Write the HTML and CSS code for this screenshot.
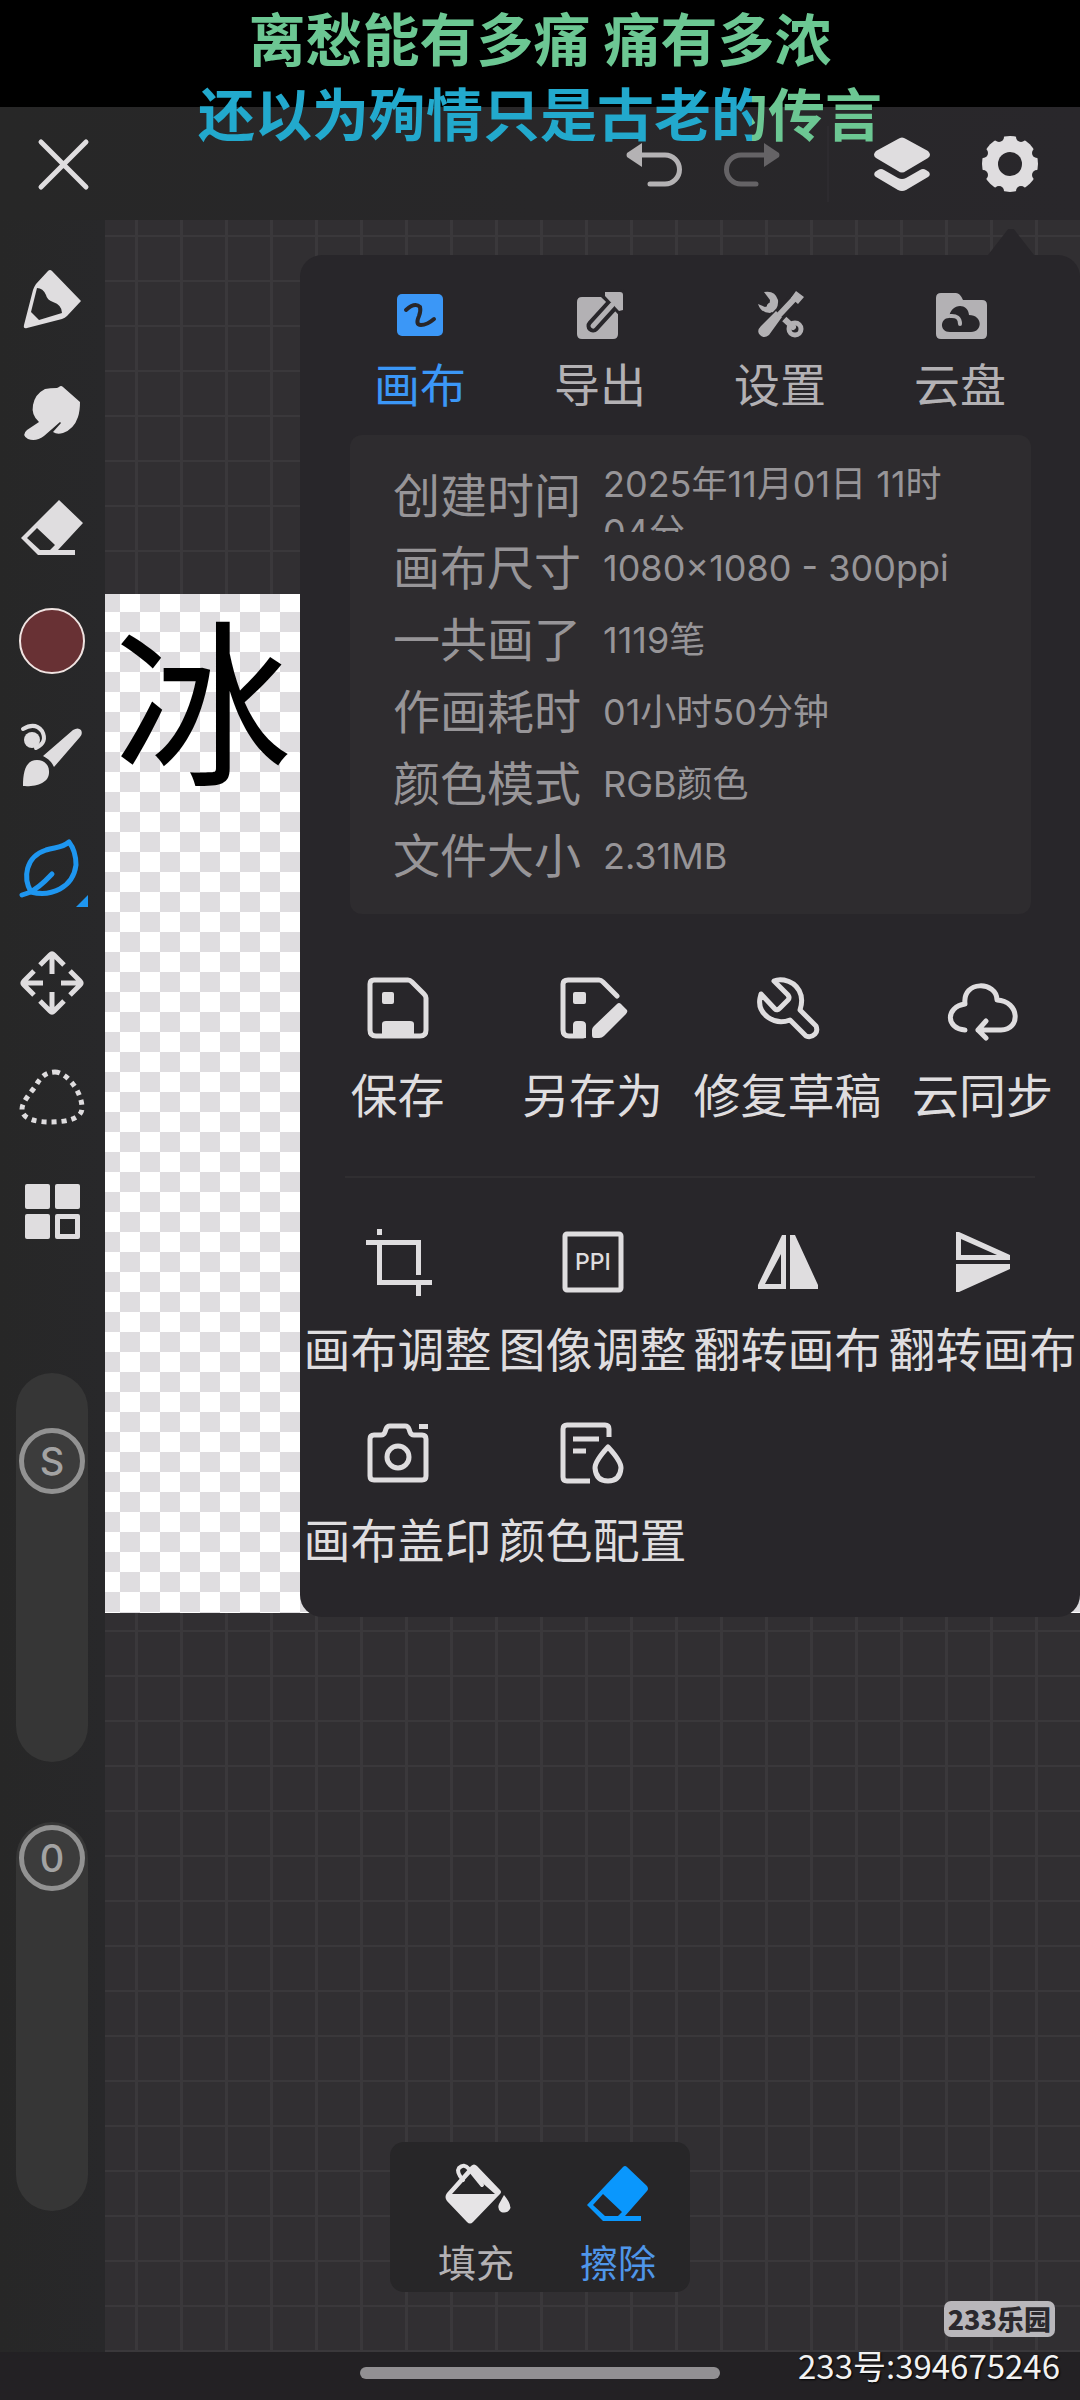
FILE: index.html
```html
<!DOCTYPE html>
<html lang="zh-CN">
<head>
<meta charset="utf-8">
<meta name="viewport" content="width=device-width, initial-scale=1">
<title>画布设置</title>
<link rel="stylesheet" href="styles.css">
</head>
<body>
<div class="app">
  <div class="status-bar"></div>

  <header class="topbar">
    <button class="tool-icon" type="button" aria-label="关闭">
      <svg viewBox="0 0 72 72"><path class="line" d="M14 14 59 59M59 14 14 59"/></svg>
    </button>
    <div class="topbar-actions">
      <button class="tool-icon undo" type="button" aria-label="撤销">
        <svg viewBox="0 0 72 72"><path d="M8 25 23 15V39L8 29Q7 27 8 25Z"/><path class="line" d="M22 27H46a14 14 0 0 1 0 29H31"/></svg>
      </button>
      <button class="tool-icon redo" type="button" aria-label="重做">
        <svg viewBox="0 0 72 72"><path d="M64 25 49 15V39L64 29Q65 27 64 25Z"/><path class="line" d="M50 27H26a14 14 0 0 0 0 29H41"/></svg>
      </button>
      <span class="separator"></span>
      <button class="tool-icon" type="button" aria-label="图层">
        <svg viewBox="0 0 72 72"><path d="M32 11Q36 8 40 11L62 23Q66 27 62 30L40 43Q36 46 32 43L10 30Q6 27 10 23Z"/><path d="M12 42Q15 40 18 42L32 50Q36 52 40 50L54 42Q57 40 60 42L63 44Q65 47 62 49L40 62Q36 64 32 62L10 49Q7 47 9 44Z"/></svg>
      </button>
      <button class="tool-icon" type="button" aria-label="设置">
        <svg viewBox="0 0 72 72">
          <mask id="gear-cut">
            <rect width="72" height="72" fill="#fff"/>
            <circle cx="36" cy="36" r="12" fill="#000"/>
            <g fill="#000">
              <circle cx="47" cy="9" r="5"/><circle cx="63" cy="25" r="5"/>
              <circle cx="63" cy="47" r="5"/><circle cx="47" cy="63" r="5"/>
              <circle cx="25" cy="63" r="5"/><circle cx="9" cy="47" r="5"/>
              <circle cx="9" cy="25" r="5"/><circle cx="25" cy="9" r="5"/>
            </g>
          </mask>
          <circle cx="36" cy="36" r="28" mask="url(#gear-cut)"/>
        </svg>
      </button>
    </div>
  </header>

  <main class="workspace">
    <nav class="sidebar" aria-label="工具">
      <button class="tool" type="button" aria-label="画笔">
        <svg viewBox="0 0 72 72"><path fill-rule="evenodd" d="M32 8Q34 6 36 8L65 38 51 53Q49 55 46 56L11 65Q7 66 8 62L17 27Q18 24 20 21ZM21 25 15 49 23 57 46 50Q46 42 37 39 31 37 30 32 27 25 21 25Z"/></svg>
      </button>
      <button class="tool" type="button" aria-label="涂抹">
        <svg viewBox="0 0 72 72"><path d="M43 10Q45 8 47 10L64 25Q64 34 62 40 58 52 47 56 41 58 37 55L45 46 44 45Q36 52 28 59 20 65 12 62 5 58 11 53L23 45Q15 38 17 28 19 17 29 12 34 11 41 11Z"/></svg>
      </button>
      <button class="tool" type="button" aria-label="橡皮">
        <svg viewBox="0 0 72 72"><path fill-rule="evenodd" d="M43 9 67 32 42 59H59V64H22L5 47ZM21 37 11 47 24 59H34L39 54Z"/></svg>
      </button>
      <button class="tool" type="button" aria-label="颜色"><span class="swatch"></span></button>
      <button class="tool" type="button" aria-label="笔刷">
        <svg viewBox="0 0 72 72"><path d="M27 37 57 11Q62 8 65 11 67 15 64 18L38 48Q35 41 27 37Z"/><path d="M7 67C7 52 10 41 21 41 28 41 33 46 33 52 34 64 20 68 7 67Z"/><circle cx="16" cy="21" r="8"/><path class="line thin" d="M7 10Q19 3 26 12 32 23 20 29"/></svg>
      </button>
      <button class="tool tool-active" type="button" aria-label="叶子笔刷">
        <svg viewBox="0 0 72 72"><path class="line" d="M53 9Q60 18 60 32C57 55 35 64 15 59 7 45 9 24 30 17 40 14 46 15 53 9ZM6 62 12 60Q22 56 36 41"/><path d="M60 74 72 62V74Z"/></svg>
      </button>
      <button class="tool" type="button" aria-label="移动">
        <svg viewBox="0 0 72 72"><path class="line square" d="M24 18 34 8Q36 6 38 8L48 18M36 8V27M24 54 34 64Q36 66 38 64L48 54M36 64V45M18 24 8 34Q6 36 8 38L18 48M8 36H27M54 24 64 34Q66 36 64 38L54 48M64 36H45"/></svg>
      </button>
      <button class="tool" type="button" aria-label="套索">
        <svg viewBox="0 0 72 72"><path class="line dashed" d="M39 11C50 11 66 30 66 47 66 58 50 61 34 61 22 61 6 59 6 48 6 40 17 30 22 21 26 15 31 11 39 11Z"/></svg>
      </button>
      <button class="tool" type="button" aria-label="布局">
        <svg viewBox="0 0 72 72"><rect x="9" y="9" width="25" height="25" rx="2"/><rect x="39" y="9" width="25" height="25" rx="2"/><rect x="9" y="39" width="25" height="25" rx="2"/><path fill-rule="evenodd" d="M41 39H62Q64 39 64 41V62Q64 64 62 64H41Q39 64 39 62V41Q39 39 41 39ZM44 44V59H59V44Z"/></svg>
      </button>
      <label class="slider size"><input type="range" min="0" max="100" value="83" aria-label="大小"><span class="knob-label">S</span></label>
      <label class="slider opacity"><input type="range" min="0" max="100" value="99" aria-label="不透明度"><span class="knob-label">0</span></label>
    </nav>

    <section class="canvas">
      <div class="paper">冰心</div>
    </section>

    <div class="mode-bar">
      <button class="mode" type="button">
        <svg viewBox="0 0 60 60"><path fill-rule="evenodd" d="M25 2Q28-1 31 2L54 26Q56 28 54 30L27 58Q24 61 21 58L1 37Q-2 33 1 29ZM25 9 6 30H49Z"/><path class="line thin" d="M17 16Q10 8 13 4 18-1 23 5L36 21"/><path d="M58 31Q66 41 64 45 61 50 55 48 51 45 53 40Z"/></svg>
        <span>填充</span>
      </button>
      <button class="mode mode-active" type="button">
        <svg viewBox="0 0 60 60"><path fill-rule="evenodd" d="M35 3Q37 1 39 3L59 22Q61 25 59 27L37 52H53V57H15L-1 41ZM15 30 5 41 17 52H30L34 48Z"/></svg>
        <span>擦除</span>
      </button>
    </div>
  </main>

  <footer class="navbar"><span class="home-bar"></span></footer>

  <section class="panel" aria-label="画布设置">
    <div class="tabs" role="tablist">
      <button class="tab tab-active" type="button" role="tab" aria-selected="true">
        <svg viewBox="0 0 48 48"><rect x="1" y="3" width="46" height="42" rx="5"/><path class="cut" d="M10 19Q19 11 24 16 25 20 23 25 19 34 25 34 31 34 38 28"/></svg>
        <span>画布</span>
      </button>
      <button class="tab" type="button" role="tab">
        <svg viewBox="0 0 48 48"><path d="M6 6H25L42 22V43Q42 48 37 48H6Q1 48 1 43V11Q1 6 6 6Z"/><path class="cut wide" d="M17 35 38 12"/><path class="halo" d="M29 1H44Q47 1 47 4V19L43 20 29 5Z"/><path class="line" d="M17 35 36 14"/></svg>
        <span>导出</span>
      </button>
      <button class="tab" type="button" role="tab">
        <svg viewBox="0 0 48 48"><path class="line heavy" d="M14 15 37 36"/><path d="M8 1Q19-1 22 9 23 19 14 22 5 22 2 13L9 16Q14 15 14 9Z"/><circle class="line" cx="39" cy="38" r="6"/><path class="cut wide" d="M40 6 10 38"/><path class="line heavy" d="M40 6 24 23"/><path d="M40 0 48 6 42 13 35 7ZM20 20 26 26 13 44Q8 48 4 44 0 40 5 35Z"/></svg>
        <span>设置</span>
      </button>
      <button class="tab" type="button" role="tab">
        <svg viewBox="0 0 48 48"><path d="M5 2H20Q24 2 27 9H46Q51 9 51 14V43Q51 48 46 48H5Q0 48 0 43V7Q0 2 5 2Z"/><path class="cloud-cut" d="M14 41C3 41 4 27 13 27 14 12 32 11 33 24 47 24 47 41 35 41Z"/><path class="line thin" d="M14 25Q24 24 24 33"/></svg>
        <span>云盘</span>
      </button>
    </div>

    <dl class="info">
      <dt>创建时间</dt><dd>2025年11月01日 11时04分</dd>
      <dt>画布尺寸</dt><dd>1080×1080 - 300ppi</dd>
      <dt>一共画了</dt><dd>1119笔</dd>
      <dt>作画耗时</dt><dd>01小时50分钟</dd>
      <dt>颜色模式</dt><dd>RGB颜色</dd>
      <dt>文件大小</dt><dd>2.31MB</dd>
    </dl>

    <div class="actions">
      <button class="action" type="button">
        <svg viewBox="0 0 64 64"><path class="line" d="M8 4H42Q44 4 46 6L58 18Q60 20 60 22V54Q60 60 54 60H10Q4 60 4 54V8Q4 4 8 4Z"/><rect x="16" y="16" width="12" height="12" rx="2"/><path d="M16 62V48Q16 45 20 45H44Q48 45 48 48V62Z"/></svg>
        <span>保存</span>
      </button>
      <button class="action" type="button">
        <svg viewBox="0 0 64 64"><path class="line" d="M22 60H8Q2 60 2 54V8Q2 4 7 4H38Q40 4 42 6L56 20"/><rect x="12" y="16" width="13" height="12" rx="2"/><path d="M12 62V49Q12 45 16 45H20Q25 45 25 49V62ZM56 28Q58 26 60 28L66 34Q67 36 65 38L43 60Q41 62 38 62H33Q31 62 31 59V54Q31 52 33 50Z"/></svg>
        <span>另存为</span>
      </button>
      <button class="action" type="button">
        <svg viewBox="0 0 64 64"><path class="line" d="M18 5Q22 3 28 4C42 7 49 19 44 34L60 50Q62 55 59 58 55 62 50 60L34 44C18 50 1 38 4 22L5 18 19 33Q21 35 24 32L32 24Q34 22 32 19Z"/></svg>
        <span>修复草稿</span>
      </button>
      <button class="action" type="button">
        <svg viewBox="0 0 64 64"><path class="line" d="M14 54C-5 53-6 31 14 28 11 4 46 5 46 24 69 25 70 54 50 54H27M35 45 27 54 35 62"/></svg>
        <span>云同步</span>
      </button>
    </div>

    <hr class="divider">

    <div class="actions">
      <button class="action" type="button">
        <svg viewBox="0 0 64 64"><path d="M11-1H16V5H11ZM0 10H55V45H50V15H16V50H66V55H55V66H50V55H11V15H0Z"/></svg>
        <span>画布调整</span>
      </button>
      <button class="action" type="button">
        <svg viewBox="0 0 64 64"><rect class="line" x="4" y="4" width="56" height="56" rx="2"/><text x="32" y="40" text-anchor="middle">PPI</text></svg>
        <span>图像调整</span>
      </button>
      <button class="action" type="button">
        <svg viewBox="0 0 64 64"><path fill-rule="evenodd" d="M26 5H30V59H2V55ZM25 24 9 54H25ZM34 5H39L62 55V59H34Z"/></svg>
        <span>翻转画布</span>
      </button>
      <button class="action" type="button">
        <svg viewBox="0 0 64 64"><path fill-rule="evenodd" d="M5 2H8L59 25V30H5ZM10 9V25H46ZM5 34H59V39L8 62H5Z"/></svg>
        <span>翻转画布</span>
      </button>
      <button class="action" type="button">
        <svg viewBox="0 0 64 64"><path class="line" d="M8 14H15Q18 14 19 11L20 8Q21 5 24 5H39Q42 5 43 8L44 11Q45 14 48 14H56Q60 14 60 18V55Q60 59 56 59H8Q4 59 4 55V18Q4 14 8 14Z"/><circle class="line" cx="32" cy="36" r="11"/><rect x="53" y="3" width="9" height="5"/></svg>
        <span>画布盖印</span>
      </button>
      <button class="action" type="button">
        <svg viewBox="0 0 64 64"><path class="line square" d="M48 16V8Q48 4 44 4H6Q2 4 2 8V56Q2 60 6 60H29M12 18H38M12 30H25"/><path class="line" d="M47 26Q60 40 60 47 59 60 47 60 35 60 34 47 34 40 47 26Z"/></svg>
        <span>颜色配置</span>
      </button>
    </div>
  </section>

  <div class="lyrics">
    <p>离愁能有多痛 痛有多浓</p>
    <p class="lyrics-current">还以为殉情只是古老的传言</p>
  </div>

  <div class="watermark">
    <span class="watermark-logo">233乐园</span>
    <span class="watermark-id">233号:394675246</span>
  </div>
</div>
</body>
</html>
```
FILE: styles.css
```css
:root {
  --icon: #dfdddf;
  --panel: #28262a;
  --blue: #3b97f7;
}

* { box-sizing: border-box; }

body {
  margin: 0;
  background: #000;
  font-family: "Noto Sans CJK SC", sans-serif;
  color: var(--icon);
}

button {
  padding: 0;
  border: 0;
  background: none;
  color: inherit;
  font: inherit;
}

svg {
  display: block;
  overflow: visible;
  fill: currentColor;
}

svg .line {
  fill: none;
  stroke: currentColor;
  stroke-width: 5px;
  stroke-linecap: round;
  stroke-linejoin: round;
}

svg .line.thin { stroke-width: 4px; }
svg .line.heavy { stroke-width: 6px; }
svg .line.square { stroke-linecap: butt; }
svg .line.dashed {
  stroke-linecap: butt;
  stroke-dasharray: 5 5;
}

svg .cut {
  fill: none;
  stroke: var(--panel);
  stroke-width: 4px;
  stroke-linecap: round;
}

svg .cut.wide { stroke-width: 13px; }
svg .cloud-cut { fill: var(--panel); }
svg .halo {
  stroke: var(--panel);
  stroke-width: 6px;
  paint-order: stroke;
}

.app {
  position: relative;
  display: flex;
  flex-direction: column;
  min-height: 100vh;
}

.status-bar { height: 107px; }

/* top bar */

.topbar {
  display: flex;
  align-items: center;
  justify-content: space-between;
  height: 113px;
  padding: 0 34px 0 27px;
  background: linear-gradient(90deg, #272727, #29272b);
}

.topbar-actions {
  display: flex;
  align-items: center;
}

.tool-icon svg { width: 72px; height: 72px; }
.undo { color: #b4b2b4; }
.redo { margin-left: 24px; color: #656366; }

.separator {
  width: 2px;
  height: 76px;
  margin: 0 37px 0 40px;
  background: #2d2b2f;
}

.separator + .tool-icon { margin-right: 36px; }

/* workspace */

.workspace {
  position: relative;
  display: flex;
  flex: 1;
}

.sidebar {
  display: flex;
  flex: none;
  flex-direction: column;
  align-items: center;
  width: 105px;
  padding: 22px 1px 0 0;
  background: linear-gradient(90deg, #272727, #28282a);
}

.tool {
  display: grid;
  place-items: center;
  width: 104px;
  height: 114px;
}

.tool svg { width: 72px; height: 72px; }
.tool-active { color: #1e96f0; }

.swatch {
  width: 66px;
  height: 66px;
  border: 2px solid #f0e4e2;
  border-radius: 50%;
  background: #683134;
}

.slider {
  position: relative;
  width: 72px;
  height: 389px;
}

.slider.size { margin-top: 105px; }
.slider.opacity { margin-top: 60px; }

.slider input {
  display: block;
  width: 100%;
  height: 100%;
  margin: 0;
  appearance: none;
  border-radius: 36px;
  background: #363636;
  writing-mode: vertical-lr;
  direction: rtl;
}

.slider input::-webkit-slider-thumb {
  width: 66px;
  height: 66px;
  appearance: none;
  border: 5px solid #929292;
  border-radius: 50%;
  background: #3c3c3c;
}

.knob-label {
  position: absolute;
  top: 55px;
  left: 0;
  width: 100%;
  color: #a3a3a3;
  font: 500 38px/66px Inter, sans-serif;
  text-align: center;
  pointer-events: none;
}

.slider.opacity .knob-label { top: 3px; }

.canvas {
  flex: 1;
  min-width: 0;
  padding-top: 374px;
  overflow: hidden;
  background:
    repeating-linear-gradient(90deg, transparent 0 30px, #3a383b 30px 33px, transparent 33px 45px),
    repeating-linear-gradient(180deg, transparent 0 15px, #3a383b 15px 17px, transparent 17px 45px),
    #312f32;
}

.paper {
  height: 1019px;
  padding-left: 9px;
  overflow: hidden;
  background: repeating-conic-gradient(#dfdde0 0 25%, #fff 0 50%) -5px -22px / 40px 40px;
  color: #000;
  font-size: 178px;
  line-height: 202px;
  white-space: nowrap;
}

.mode-bar {
  position: absolute;
  bottom: 60px;
  left: 50%;
  display: flex;
  width: 300px;
  height: 150px;
  margin-left: -150px;
  padding: 22px 1px 0 15px;
  border-radius: 14px;
  background: #272628;
}

.mode {
  display: flex;
  flex: 1;
  flex-direction: column;
  align-items: center;
  gap: 16px;
  color: #b4b2b5;
  font-size: 38px;
  line-height: 42px;
}

.mode svg { width: 60px; height: 60px; color: #e6e4e6; }
.mode-active { color: #4f96ea; }
.mode-active svg { color: #0a97fd; }

.navbar {
  display: flex;
  justify-content: center;
  height: 48px;
  padding-top: 15px;
  background: #232124;
}

.home-bar {
  width: 360px;
  height: 12px;
  border-radius: 6px;
  background: #929093;
}

/* settings panel */

.panel {
  position: absolute;
  top: 255px;
  right: 0;
  left: 300px;
  padding: 36px 0 50px;
  border-radius: 22px;
  background: var(--panel);
}

.panel::before {
  position: absolute;
  top: -26px;
  right: 46px;
  width: 46px;
  height: 26px;
  background: var(--panel);
  clip-path: polygon(44% 0, 56% 0, 100% 100%, 0 100%);
  content: "";
}

.tabs {
  display: grid;
  grid-template-columns: repeat(4, 1fr);
  padding: 0 30px;
}

.tab {
  display: flex;
  flex-direction: column;
  align-items: center;
  gap: 14px;
  color: #b3b1b4;
  font-size: 46px;
  line-height: 58px;
}

.tab svg { width: 48px; height: 48px; }
.tab-active { color: var(--blue); }

.info {
  display: grid;
  grid-template-columns: 210px 1fr;
  margin: 24px 49px 62px 50px;
  padding: 25px 60px 22px 43px;
  border-radius: 12px;
  background: #2e2c2f;
  color: #979598;
}

.info dt {
  font-size: 47px;
  line-height: 66px;
  white-space: nowrap;
}

.info dd {
  display: grid;
  align-content: safe center;
  height: 72px;
  margin: 0;
  overflow: hidden;
  font: 400 36px/48px Inter, "Noto Sans CJK SC", sans-serif;
}

.actions {
  display: grid;
  grid-template-columns: repeat(4, 1fr);
  row-gap: 45px;
}

.action {
  display: flex;
  flex-direction: column;
  align-items: center;
  gap: 24px;
  font-size: 47px;
  line-height: 58px;
  white-space: nowrap;
}

.action svg { width: 64px; height: 64px; }

.action text {
  font: 500 23px Inter, sans-serif;
}

.divider {
  height: 2px;
  margin: 54px 45px 52px;
  border: 0;
  background: #302e31;
}

/* floating overlays */

.lyrics {
  position: absolute;
  top: 0;
  right: 0;
  left: 0;
  text-align: center;
  color: #6cc793;
  font-size: 57px;
  font-weight: 700;
  line-height: 75px;
  pointer-events: none;
}

.lyrics p {
  width: max-content;
  margin: -1px auto 1px;
}

.lyrics .lyrics-current {
  background: linear-gradient(90deg, #22a9cd 81%, #6cc793 81%);
  background-clip: text;
  color: transparent;
}

.watermark {
  position: absolute;
  right: 20px;
  bottom: 15px;
  display: flex;
  flex-direction: column;
  align-items: flex-end;
  gap: 8px;
}

.watermark-logo {
  margin-right: 5px;
  padding: 0 4px;
  border-radius: 7px;
  background: #b9b7bb;
  color: #2b292d;
  font-size: 27px;
  font-weight: 900;
  line-height: 36px;
}

.watermark-id {
  color: #f2f2f2;
  font-size: 33px;
  line-height: 40px;
  text-shadow: 1px 1px 2px #000;
}
```
